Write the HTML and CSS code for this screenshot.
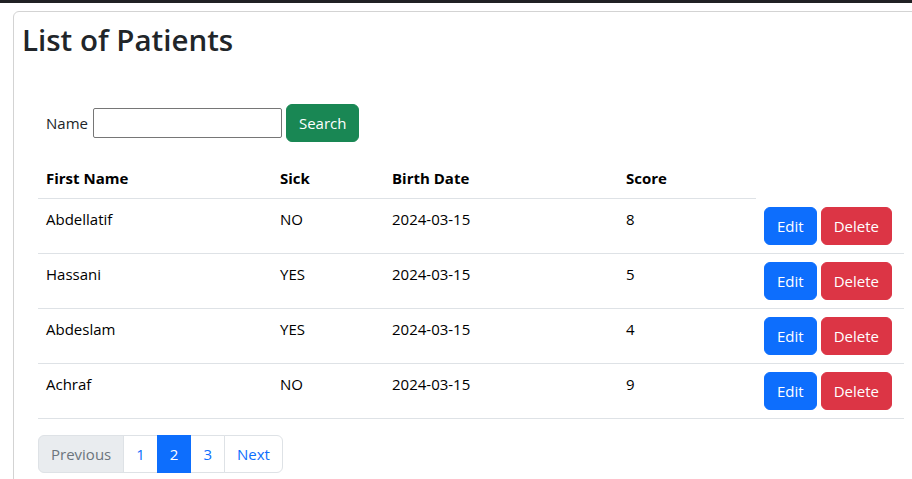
FILE: index.html
```html
<!DOCTYPE html>
<html>
<head>
<meta charset="utf-8">
<link rel="stylesheet" href="styles.css">
</head>
<body>
<div class="topbar"></div>
<div class="card">
  <h1 class="title">List of Patients</h1>
  <div class="content">
    <form class="search">
      <label class="label">Name</label>
      <input class="input" type="text">
      <button class="btn btn-green" type="button">Search</button>
    </form>
    <table class="table">
      <colgroup>
        <col class="c1"><col class="c2"><col class="c3"><col class="c4"><col class="c5">
      </colgroup>
      <thead>
        <tr><th>First Name</th><th>Sick</th><th>Birth Date</th><th>Score</th></tr>
      </thead>
      <tbody>
        <tr><td>Abdellatif</td><td>NO</td><td>2024-03-15</td><td>8</td><td class="actions"><button class="btn btn-blue">Edit</button><button class="btn btn-red">Delete</button></td></tr>
        <tr><td>Hassani</td><td>YES</td><td>2024-03-15</td><td>5</td><td class="actions"><button class="btn btn-blue">Edit</button><button class="btn btn-red">Delete</button></td></tr>
        <tr><td>Abdeslam</td><td>YES</td><td>2024-03-15</td><td>4</td><td class="actions"><button class="btn btn-blue">Edit</button><button class="btn btn-red">Delete</button></td></tr>
        <tr><td>Achraf</td><td>NO</td><td>2024-03-15</td><td>9</td><td class="actions"><button class="btn btn-blue">Edit</button><button class="btn btn-red">Delete</button></td></tr>
      </tbody>
    </table>
    <ul class="pagination">
      <li class="page disabled">Previous</li>
      <li class="page">1</li>
      <li class="page active">2</li>
      <li class="page">3</li>
      <li class="page">Next</li>
    </ul>
  </div>
</div>
</body>
</html>
```
FILE: styles.css
```css
* { box-sizing: border-box; }
html, body { margin: 0; padding: 0; background: #fff; overflow: hidden; }
body {
  font-family: "Open Sans", "Noto Sans", sans-serif;
  font-size: 15px;
  line-height: 24px;
  color: #212529;
}
.topbar { height: 3px; background: #202124; }
.card {
  margin: 8px 0 0 13px;
  width: 940px;
  height: 480px;
  border: 1px solid #d3d3d3;
  border-radius: 6px;
  padding: 9px 8px 0 8px;
}
.title {
  margin: 0;
  font-size: 29.5px;
  font-weight: 600;
  line-height: 38px;
  color: #212529;
}
.content { margin: 45px 0 0 16px; }
.search {
  display: flex;
  align-items: center;
  padding-left: 8px;
  margin-bottom: 16px;
}
.label { font-size: 15px; margin-right: 5px; }
.input {
  width: 189px;
  height: 30px;
  border: 1px solid #767676;
  border-radius: 2px;
  padding: 0 4px;
  margin-right: 4px;
  font: inherit;
}
.btn {
  display: inline-block;
  font-family: inherit;
  font-size: 15px;
  line-height: 24px;
  padding: 6px 12px;
  border: 1px solid transparent;
  border-radius: 6px;
  color: #fff;
  cursor: pointer;
}
.btn-green { background: #198754; border-color: #198754; }
.btn-blue { background: #0d6efd; border-color: #0d6efd; }
.btn-red { background: #dc3545; border-color: #dc3545; margin-left: 4px; }
.table {
  border-collapse: collapse;
  width: 866px;
  table-layout: fixed;
}
.c1 { width: 234px; }
.c2 { width: 112px; }
.c3 { width: 234px; }
.c4 { width: 138px; }
.c5 { width: 148px; }
.table th, .table td {
  text-align: left;
  vertical-align: top;
  padding: 8px;
  border-bottom: 1px solid #dee2e6;
  white-space: nowrap;
}
.table th { font-weight: 700; color: #000; }
.table td { color: #000; }
.pagination {
  list-style: none;
  margin: 16px 0 0 0;
  padding: 0;
  display: flex;
}
.page {
  padding: 6px 12px;
  border: 1px solid #dee2e6;
  margin-left: -1px;
  color: #0d6efd;
  background: #fff;
}
.page:first-child { margin-left: 0; border-radius: 6px 0 0 6px; }
.page:last-child { border-radius: 0 6px 6px 0; }
.page.disabled { background: #e9ecef; color: #6c757d; }
.page.active { background: #0d6efd; border-color: #0d6efd; color: #fff; position: relative; }
```
